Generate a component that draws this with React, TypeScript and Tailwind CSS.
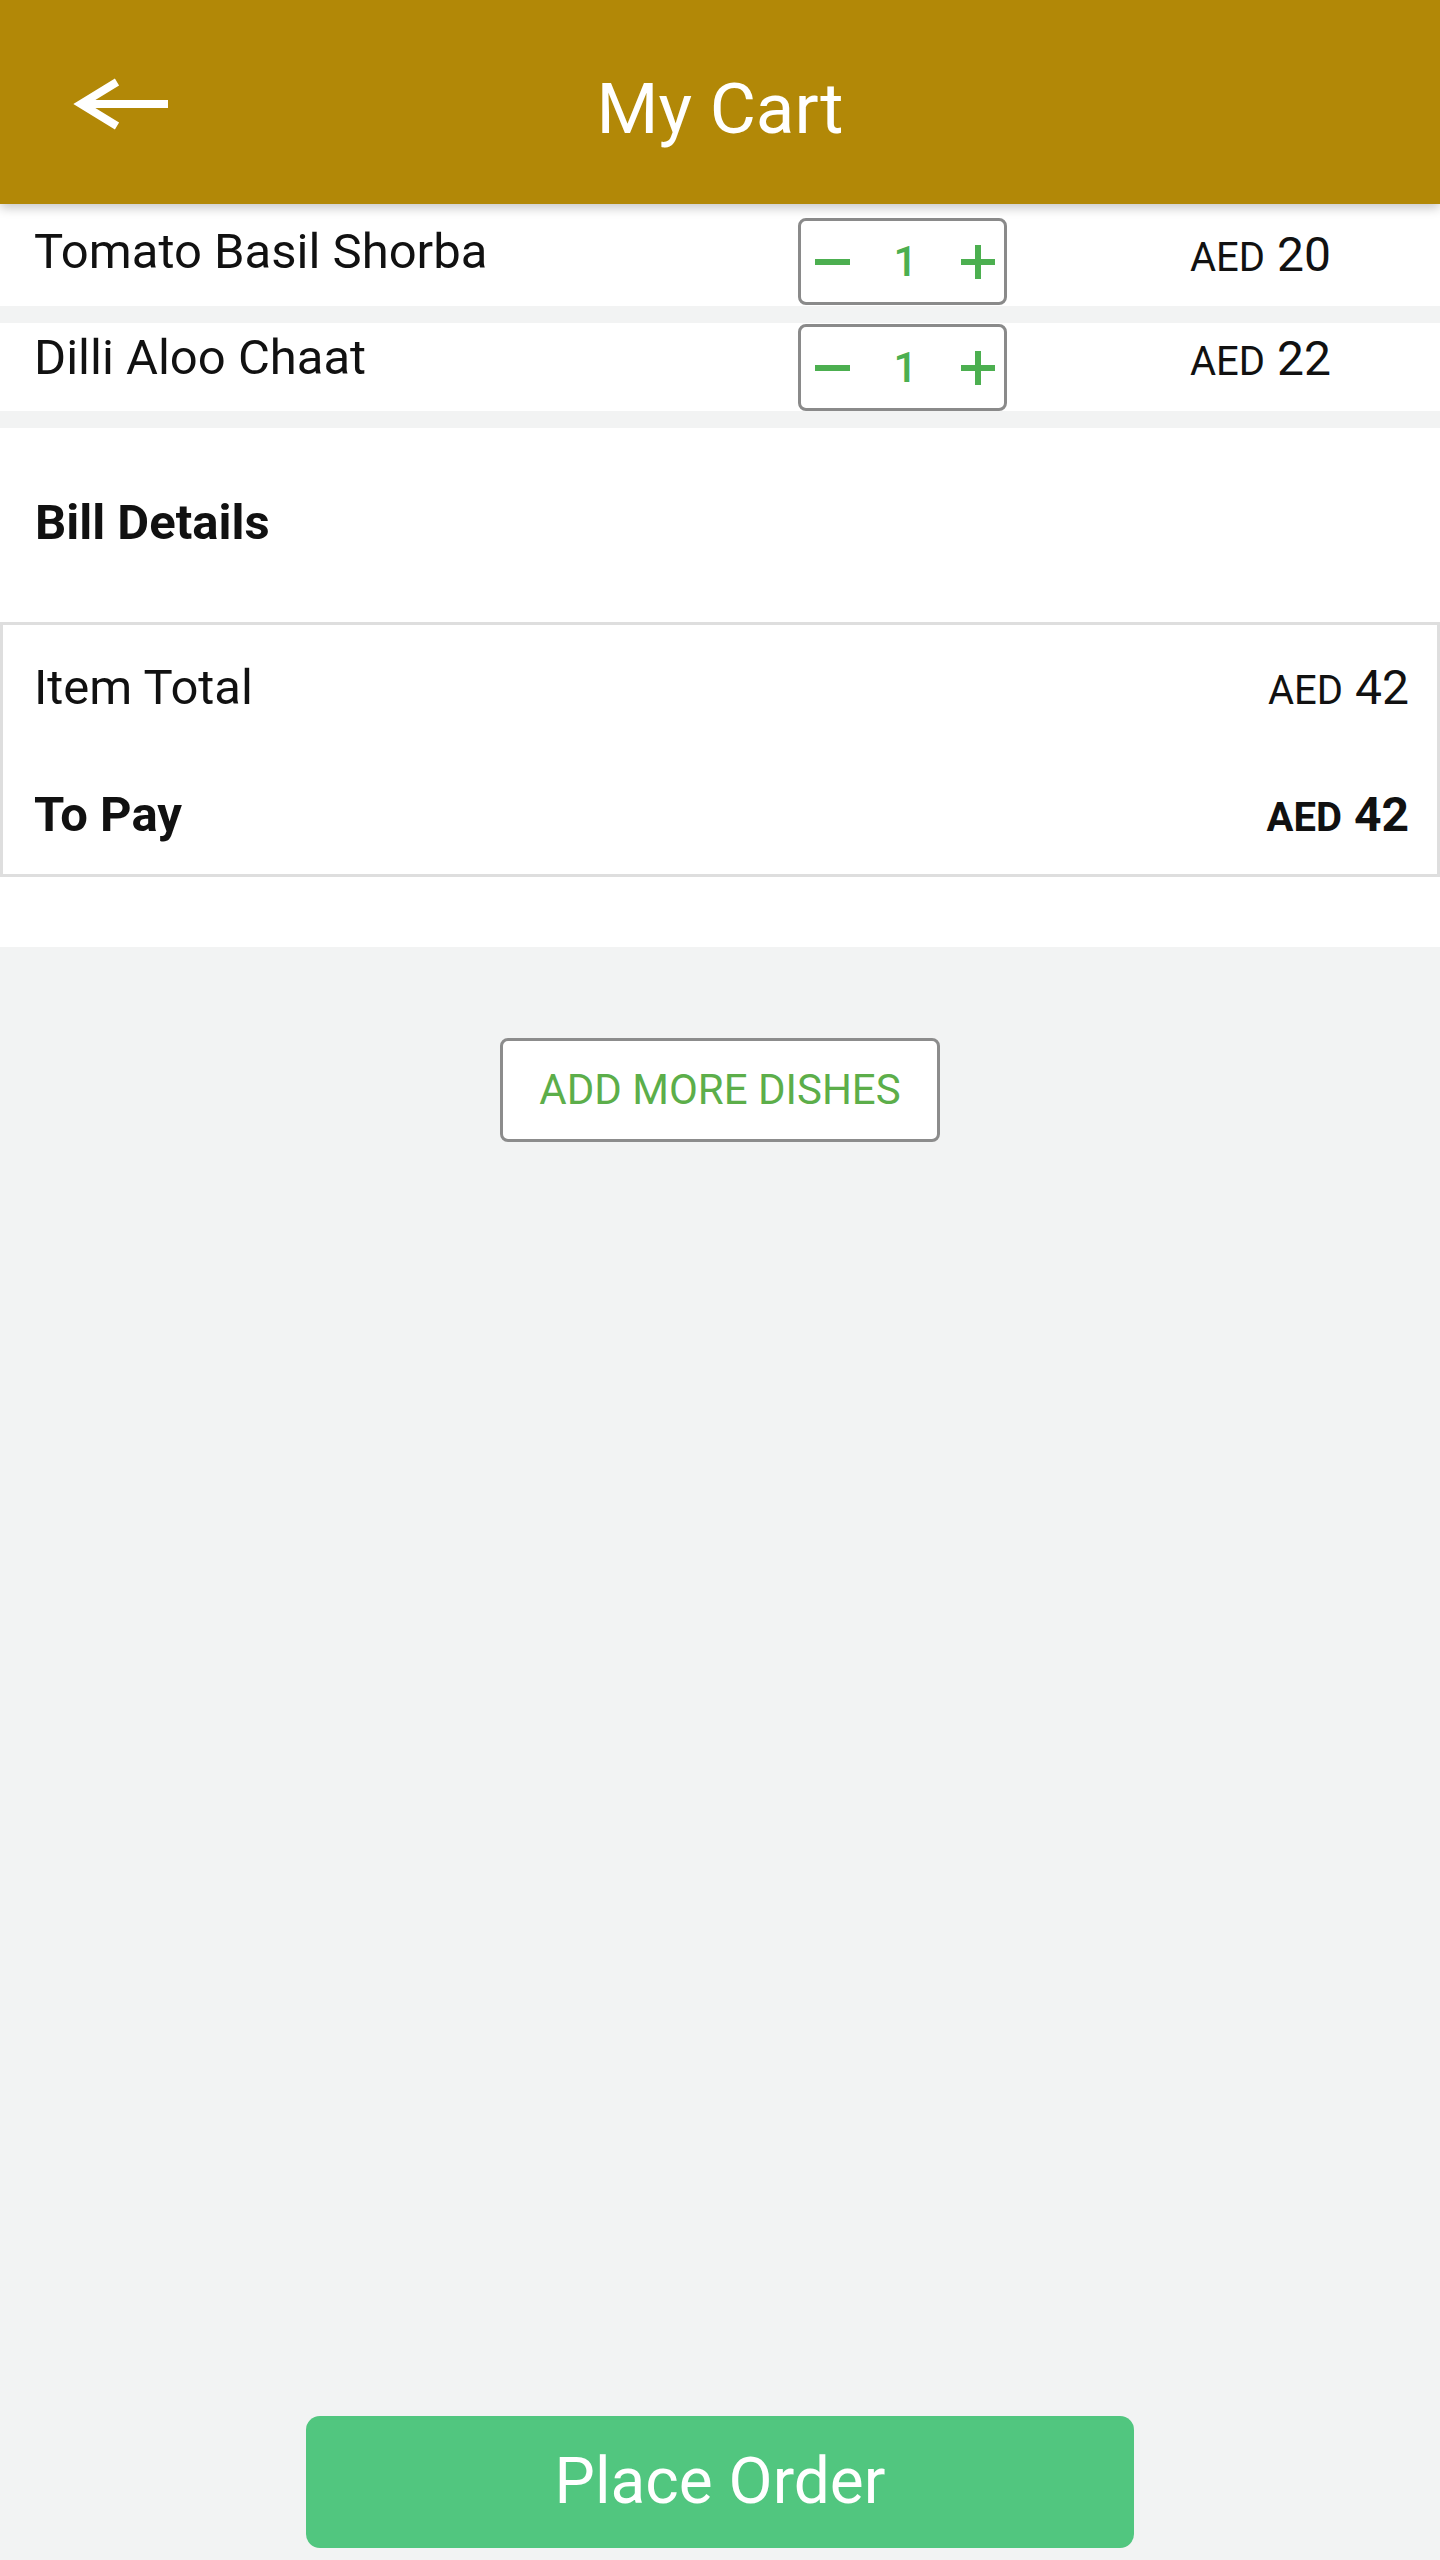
import React from 'react';

const font = { fontFamily: 'Roboto, "Liberation Sans", Arial, sans-serif' };

const items = [
  { name: 'Tomato Basil Shorba', qty: 1, price: 20 },
  { name: 'Dilli Aloo Chaat', qty: 1, price: 22 }
];

const BackArrow = () => (
  <svg width="100" height="56" viewBox="0 0 100 56" fill="none" stroke="#ffffff" strokeWidth="8">
    <path d="M10 28 H96" />
    <path d="M45 6 L9 28 L45 50" strokeLinejoin="miter" />
  </svg>
);

const Minus = () => (
  <svg width="35" height="6" viewBox="0 0 35 6">
    <rect x="0" y="0" width="35" height="6" fill="#4caf50" />
  </svg>
);

const Plus = () => (
  <svg width="34" height="34" viewBox="0 0 34 34">
    <rect x="0" y="14" width="34" height="6" fill="#4caf50" />
    <rect x="14" y="0" width="6" height="34" fill="#4caf50" />
  </svg>
);

const Stepper: React.FC<{ qty: number }> = ({ qty }) => (
  <div className="flex items-center w-[209px] h-[87px] border-[3px] border-[#8a8a8a] rounded-[8px] bg-white">
    <div className="ml-[14px] flex items-center">
      <Minus />
    </div>
    <span className="flex-1 text-center text-[42px] leading-[42px] font-medium text-[#4caf50]">{qty}</span>
    <div className="mr-[9px] flex items-center">
      <Plus />
    </div>
  </div>
);

const Price: React.FC<{ value: number; bold?: boolean }> = ({ value, bold }) => (
  <span className={`flex items-baseline text-[#111] leading-[47px] ${bold ? 'font-bold' : ''}`}>
    <span className="text-[40px]">AED</span>
    <span className="text-[48px] ml-[12px]">{value}</span>
  </span>
);

export default function App() {
  return (
    <div style={font} className="min-h-[2560px] w-[1440px] flex flex-col bg-[#f2f3f3]">
      <header className="relative z-10 h-[204px] flex items-center pt-[12px] bg-[#b28807] shadow-[0_4px_10px_rgba(0,0,0,0.22)]">
        <div className="w-[200px] pl-[72px] mb-[8px] flex items-center">
          <BackArrow />
        </div>
        <h1 className="flex-1 text-center text-white text-[71px] leading-[71px] font-normal">My Cart</h1>
        <div className="w-[200px]" />
      </header>

      <div className="flex items-start h-[102px] bg-white pl-[34px]">
        <div className="w-[764px] mt-[23px] text-[49px] leading-[49px] text-[#111]">{items[0].name}</div>
        <div className="mt-[14px]">
          <Stepper qty={items[0].qty} />
        </div>
        <div className="ml-[183px] mt-[27px]">
          <Price value={items[0].price} />
        </div>
      </div>
      <div className="h-[17px]" />
      <div className="flex items-start h-[88px] bg-white pl-[34px]">
        <div className="w-[764px] mt-[10px] text-[49px] leading-[49px] text-[#111]">{items[1].name}</div>
        <div className="mt-[1px]">
          <Stepper qty={items[1].qty} />
        </div>
        <div className="ml-[183px] mt-[12px]">
          <Price value={items[1].price} />
        </div>
      </div>
      <div className="h-[17px]" />

      <section className="bg-white pt-[70px] pb-[70px]">
        <h2 className="pl-[35px] text-[49px] leading-[49px] font-bold text-[#111]">Bill Details</h2>
        <div className="mt-[75px] h-[255px] border-[3px] border-[#dedede] pl-[31px] pr-[28px] pt-[38px]">
          <div className="flex items-baseline justify-between">
            <span className="text-[49px] leading-[49px] text-[#111]">Item Total</span>
            <Price value={42} />
          </div>
          <div className="mt-[76px] flex items-baseline justify-between">
            <span className="text-[49px] leading-[49px] font-bold text-[#111]">To Pay</span>
            <Price value={42} bold />
          </div>
        </div>
      </section>

      <div className="flex justify-center mt-[91px]">
        <button className="w-[440px] h-[104px] border-[3px] border-[#8c8c8c] rounded-[8px] bg-white text-[42px] leading-[42px] text-[#5cae4a]">
          ADD MORE DISHES
        </button>
      </div>

      <div className="flex-1" />

      <div className="flex justify-center mb-[12px]">
        <button className="w-[828px] h-[132px] rounded-[14px] bg-[#51c67f] text-white text-[64px] leading-[64px]">
          Place Order
        </button>
      </div>
    </div>
  );
}
